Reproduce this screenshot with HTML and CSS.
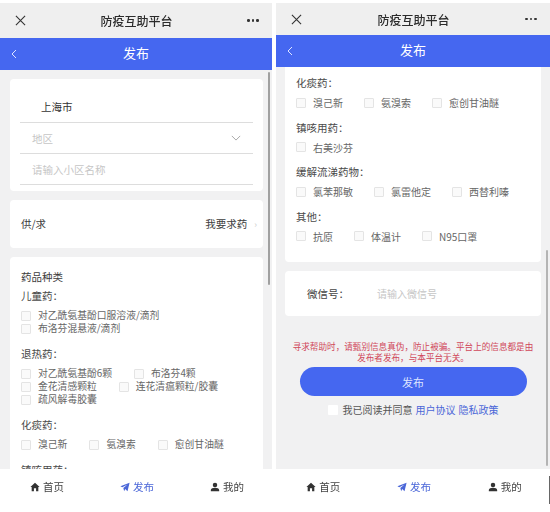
FILE: index.html
```html
<!DOCTYPE html>
<html lang="zh-CN">
<head>
    <meta charset="UTF-8">
    <meta name="viewport" content="width=device-width, initial-scale=1.0">
    <title>防疫互助平台</title>
    <link rel="stylesheet" href="styles.css">
</head>
<body>
    <!-- first screen: top of the form -->
    <div class="phone phone-left">
        <div class="wx-bar">
            <svg class="wx-close" viewBox="0 0 12 12"><path d="M1 1L11 11M11 1L1 11"/></svg>
            <span class="wx-title">防疫互助平台</span>
            <span class="wx-more"><i></i><i></i><i></i></span>
        </div>
        <div class="nav-bar">
            <svg class="nav-back" viewBox="0 0 6 10"><path d="M5 1L1 5L5 9"/></svg>
            <span>发布</span>
        </div>
        <div class="content">
            <div class="scroll-thumb"></div>
            <div class="card card-address">
                <div class="field field-city">上海市</div>
                <div class="field field-muted field-area">
                    <span>地区</span>
                    <svg class="chevron" viewBox="0 0 12 7"><path d="M1 1L6 6L11 1"/></svg>
                </div>
                <div class="field field-muted">请输入小区名称</div>
            </div>
            <div class="card card-need">
                <span>供/求</span>
                <span class="need-value">我要求药<small>›</small></span>
            </div>
            <div class="card card-drugs">
                <div class="drug-title">药品种类</div>
                <div class="group-name group-first">儿童药&#xFF1A;</div>
                <div class="options">
                    <label class="opt"><i class="box"></i>对乙酰氨基酚口服溶液/滴剂</label>
                </div>
                <div class="options">
                    <label class="opt"><i class="box"></i>布洛芬混悬液/滴剂</label>
                </div>
                <div class="group-name">退热药&#xFF1A;</div>
                <div class="options">
                    <label class="opt"><i class="box"></i>对乙酰氨基酚6颗</label>
                    <label class="opt"><i class="box"></i>布洛芬4颗</label>
                </div>
                <div class="options">
                    <label class="opt"><i class="box"></i>金花清感颗粒</label>
                    <label class="opt"><i class="box"></i>连花清瘟颗粒/胶囊</label>
                </div>
                <div class="options">
                    <label class="opt"><i class="box"></i>疏风解毒胶囊</label>
                </div>
                <div class="group-name">化痰药&#xFF1A;</div>
                <div class="options">
                    <label class="opt"><i class="box"></i>溴己新</label>
                    <label class="opt"><i class="box"></i>氨溴索</label>
                    <label class="opt"><i class="box"></i>愈创甘油醚</label>
                </div>
                <div class="group-name">镇咳用药&#xFF1A;</div>
            </div>
        </div>
        <div class="tabs">
            <div class="tab"><svg viewBox="0 0 12 12"><path class="solid" d="M6 1L11.5 6H10V11H7.3V7.6H4.7V11H2V6H.5Z"/></svg>首页</div>
            <div class="tab tab-active"><svg viewBox="0 0 12 12"><path class="solid" d="M11.5 1L9 11L6.2 8.3L5 11L4 7.3L9 3L2.8 6.3L.5 5Z"/></svg>发布</div>
            <div class="tab"><svg viewBox="0 0 12 12"><circle class="solid" cx="6" cy="3.5" r="2.7"/><path class="solid" d="M1 11V9.6C1 7.8 3.5 7 6 7S11 7.8 11 9.6V11Z"/></svg>我的</div>
        </div>
    </div>

    <!-- second screen: scrolled to the bottom -->
    <div class="phone phone-right">
        <div class="wx-bar">
            <svg class="wx-close" viewBox="0 0 12 12"><path d="M1 1L11 11M11 1L1 11"/></svg>
            <span class="wx-title">防疫互助平台</span>
            <span class="wx-more"><i></i><i></i><i></i></span>
        </div>
        <div class="nav-bar">
            <svg class="nav-back" viewBox="0 0 6 10"><path d="M5 1L1 5L5 9"/></svg>
            <span>发布</span>
        </div>
        <div class="content">
            <div class="scroll-thumb"></div>
            <div class="card card-drugs-end">
                <div class="group-name">化痰药&#xFF1A;</div>
                <div class="options options-wide">
                    <label class="opt"><i class="box"></i>溴己新</label>
                    <label class="opt"><i class="box"></i>氨溴索</label>
                    <label class="opt"><i class="box"></i>愈创甘油醚</label>
                </div>
                <div class="group-name">镇咳用药&#xFF1A;</div>
                <div class="options options-wide">
                    <label class="opt"><i class="box"></i>右美沙芬</label>
                </div>
                <div class="group-name">缓解流涕药物&#xFF1A;</div>
                <div class="options options-wide">
                    <label class="opt"><i class="box"></i>氯苯那敏</label>
                    <label class="opt"><i class="box"></i>氯雷他定</label>
                    <label class="opt"><i class="box"></i>西替利嗪</label>
                </div>
                <div class="group-name">其他&#xFF1A;</div>
                <div class="options options-wide">
                    <label class="opt"><i class="box"></i>抗原</label>
                    <label class="opt"><i class="box"></i>体温计</label>
                    <label class="opt"><i class="box"></i>N95口罩</label>
                </div>
            </div>
            <div class="card card-wechat">
                <span class="wechat-label">微信号&#xFF1A;</span>
                <span class="wechat-input">请输入微信号</span>
            </div>
            <p class="notice">寻求帮助时&#xFF0C;请甄别信息真伪&#xFF0C;防止被骗&#x3002;平台上的信息都是由<br>发布者发布&#xFF0C;与本平台无关&#x3002;</p>
            <button class="submit" type="button">发布</button>
            <div class="agree">
                <i class="agree-box"></i>我已阅读并同意
                <a>用户协议</a>
                <a>隐私政策</a>
            </div>
        </div>
        <div class="tabs">
            <div class="tab"><svg viewBox="0 0 12 12"><path class="solid" d="M6 1L11.5 6H10V11H7.3V7.6H4.7V11H2V6H.5Z"/></svg>首页</div>
            <div class="tab tab-active"><svg viewBox="0 0 12 12"><path class="solid" d="M11.5 1L9 11L6.2 8.3L5 11L4 7.3L9 3L2.8 6.3L.5 5Z"/></svg>发布</div>
            <div class="tab"><svg viewBox="0 0 12 12"><circle class="solid" cx="6" cy="3.5" r="2.7"/><path class="solid" d="M1 11V9.6C1 7.8 3.5 7 6 7S11 7.8 11 9.6V11Z"/></svg>我的</div>
        </div>
        <div class="edge-mark"></div>
    </div>
</body>
</html>
```

FILE: styles.css
```css
html, body {
    margin: 0;
    height: 512px;
    overflow: hidden;
}
body {
    display: flex;
    gap: 4px;
    background: #fff;
    color: #444;
    font-family: "Noto Sans CJK SC", "Noto Sans", sans-serif;
    font-size: 10.5px;
    filter: blur(0.45px);
}
.phone {
    position: relative;
    display: flex;
    flex-direction: column;
    height: 509px;
    margin-top: 3px;
}
.phone-left {
    width: 272px;
}
.phone-right {
    width: 274px;
}

/* wechat title bar */
.wx-bar {
    display: flex;
    align-items: center;
    justify-content: space-between;
    height: 35px;
    padding: 0 13px 0 15px;
    box-sizing: border-box;
    background: #efefef;
}
.phone-right .wx-bar {
    height: 32px;
}
.wx-close {
    width: 11px;
    height: 11px;
    fill: none;
    stroke: #333;
    stroke-width: 1.2;
}
.wx-title {
    color: #2b2b2b;
    font-size: 12px;
    font-weight: 500;
}
.wx-more {
    display: flex;
    gap: 2px;
}
.wx-more i {
    width: 2.6px;
    height: 2.6px;
    border-radius: 50%;
    background: #333;
}

/* blue nav */
.nav-bar {
    position: relative;
    display: flex;
    align-items: center;
    justify-content: center;
    height: 32px;
    padding-bottom: 3px;
    box-sizing: border-box;
    background: #4567f0;
    color: #fff;
    font-size: 13px;
    flex-shrink: 0;
}
.nav-back {
    position: absolute;
    left: 11px;
    top: 11px;
    width: 6px;
    height: 10px;
    fill: none;
    stroke: #dfe5ff;
    stroke-width: 1;
}

.content {
    position: relative;
    flex: 1;
    min-height: 0;
    overflow: hidden;
    background: #f1f1f2;
}
.phone-left .content {
    padding: 9px 9px 0 10px;
}
.phone-right .content {
    padding: 0 9px 0 9px;
}
.scroll-thumb {
    position: absolute;
    right: 2px;
    top: 2px;
    width: 2px;
    height: 213px;
    border-radius: 1px;
    background: #a0a0a0;
}
.phone-right .scroll-thumb {
    top: 183px;
    height: 216px;
    background: #b4b4b4;
}

.card {
    background: #fff;
    border-radius: 4px;
    margin-bottom: 9px;
}

/* address */
.card-address {
    height: 112px;
    padding: 12px 10px 0;
    box-sizing: border-box;
}
.field {
    display: flex;
    align-items: center;
    justify-content: space-between;
    height: 30px;
    padding: 0 12px;
    border-bottom: 1px solid #ddd;
}
.field-city {
    height: 31px;
    padding-left: 21px;
    color: #333;
}
.field-muted {
    color: #c6c6c6;
}
.field-area {
    padding-right: 12px;
}
.chevron {
    width: 10px;
    height: 6px;
    fill: none;
    stroke: #999;
    stroke-width: 1;
}
.card-need {
    display: flex;
    align-items: center;
    justify-content: space-between;
    height: 48px;
    padding: 0 6px 2px 11px;
    box-sizing: border-box;
    color: #3c3c3c;
}
.need-value small {
    color: #ccc;
    font-size: 9px;
    margin-left: 7px;
}

/* drug list */
.card-drugs {
    padding: 10px 11px 0;
    border-radius: 4px 4px 0 0;
}
.card-drugs-end {
    height: 195px;
    margin-bottom: 9px;
    padding: 8px 11px 0;
    box-sizing: border-box;
    border-radius: 0 0 4px 4px;
}
.drug-title {
    height: 19px;
    line-height: 19px;
    color: #3c3c3c;
}
.group-name {
    height: 19px;
    line-height: 19px;
    margin-top: 9px;
    color: #4a4a4a;
}
.group-first {
    margin-top: 0;
}
.card-drugs-end .group-name {
    height: 16px;
    line-height: 16px;
    margin-top: 0;
}
.options {
    display: flex;
    gap: 22px;
    height: 13px;
    line-height: 13px;
    color: #666;
    font-size: 9.8px;
}
.group-name + .options {
    margin-top: 4px;
}
.options-wide {
    gap: 21px;
    height: 28.5px;
    line-height: 23px;
    font-size: 10px;
}
.group-name + .options-wide {
    margin-top: 0;
}
.opt {
    display: flex;
    align-items: center;
    gap: 7px;
}
.options-wide .opt {
    height: 23px;
}
.box {
    width: 10px;
    height: 10px;
    box-sizing: border-box;
    border: 1px solid #e4e4e4;
    border-radius: 1px;
    background: #fafafa;
}

/* wechat + submit */
.card-wechat {
    display: flex;
    align-items: center;
    height: 45px;
    margin-bottom: 0;
    padding-left: 22px;
}
.wechat-label {
    width: 70px;
    color: #444;
}
.wechat-input {
    color: #c6c6c6;
    font-size: 10px;
}
.notice {
    margin: 25px 0 4px;
    color: #d0485a;
    font-size: 8.6px;
    line-height: 11px;
    text-align: center;
}
.submit {
    display: block;
    width: 227px;
    height: 29px;
    margin: 0 auto;
    border: none;
    border-radius: 15px;
    background: #4567f0;
    color: #dfe5ff;
    font-family: inherit;
    font-size: 11px;
}
.agree {
    display: flex;
    align-items: center;
    justify-content: center;
    gap: 3px;
    margin-top: 6px;
    color: #555;
    font-size: 10px;
}
.agree a {
    color: #4a66d8;
}
.agree-box {
    width: 10px;
    height: 10px;
    margin-right: 2px;
    border-radius: 1px;
    background: #fff;
}

/* bottom tabs */
.tabs {
    display: grid;
    grid-template-columns: repeat(3, 1fr);
    height: 43px;
    padding: 0 0 8px 2px;
    box-sizing: border-box;
    background: #fff;
    flex-shrink: 0;
}
.tab {
    display: flex;
    align-items: center;
    justify-content: center;
    gap: 3px;
    color: #444;
}
.tab svg {
    width: 10px;
    height: 10px;
}
.solid {
    fill: #333;
}
.tab-active {
    color: #4a66d8;
}
.tab-active .solid {
    fill: #4a66d8;
}
.edge-mark {
    position: absolute;
    right: 0;
    top: 473px;
    width: 1px;
    height: 28px;
    background: #666;
}
```
